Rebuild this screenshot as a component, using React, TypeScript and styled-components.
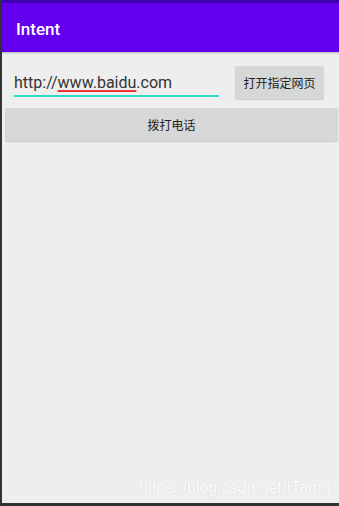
import styled, { createGlobalStyle } from 'styled-components';

const GlobalStyle = createGlobalStyle`
  html, body {
    margin: 0;
    padding: 0;
    background: #333333;
  }
  * {
    box-sizing: border-box;
  }
`;

export default function App() {
  return (
    <>
      <GlobalStyle />
      <Screen>
        <StatusBar />
        <AppBar>
          <Title>Intent</Title>
        </AppBar>
        <Content>
          <UrlRow>
            <UrlField>
              <UrlText>
                http://<Misspelled>www.baidu</Misspelled>.com
              </UrlText>
            </UrlField>
            <Button $small>打开指定网页</Button>
          </UrlRow>
          <Button $wide>拨打电话</Button>
          <Spacer />
          <Watermark>https://blog.csdn.net/ITarmi</Watermark>
        </Content>
      </Screen>
    </>
  );
}

const Screen = styled.div`
  display: flex;
  flex-direction: column;
  width: 337px;
  height: 503px;
  margin-left: 2px;
  background: #eeeeee;
  font-family: Roboto, 'Noto Sans CJK SC', sans-serif;
`;

const StatusBar = styled.div`
  height: 3px;
  background: #3b00b0;
`;

const AppBar = styled.div`
  display: flex;
  align-items: center;
  height: 49px;
  padding: 2px 0 0 14px;
  background: #6200ee;
  box-shadow: 0 1px 2px rgba(0, 0, 0, 0.25);
`;

const Title = styled.div`
  color: #ffffff;
  font-size: 17px;
  font-weight: 500;
`;

const Content = styled.div`
  display: flex;
  flex: 1;
  flex-direction: column;
  padding: 15px 1px 0 3px;
`;

const UrlRow = styled.div`
  display: flex;
  align-items: flex-start;
  justify-content: space-between;
  padding: 0 14px 0 9px;
  margin-bottom: 9px;
`;

const UrlField = styled.div`
  width: 205px;
  padding-top: 6px;
  padding-bottom: 3px;
  border-bottom: 2px solid #2fd9c8;
`;

const UrlText = styled.div`
  color: #333333;
  font-size: 16px;
  line-height: 19px;
  white-space: nowrap;
`;

const Misspelled = styled.span`
  text-decoration: underline;
  text-decoration-color: #ee3333;
  text-decoration-thickness: 2px;
  text-underline-offset: 2px;
`;

const Button = styled.div<{ $small?: boolean; $wide?: boolean }>`
  display: flex;
  align-items: center;
  justify-content: center;
  height: 33px;
  width: ${({ $small }) => ($small ? '89px' : '100%')};
  margin-top: ${({ $small }) => ($small ? '-1px' : '0')};
  background: #d6d7d7;
  border-radius: 2px;
  box-shadow: 0 1px 1px rgba(0, 0, 0, 0.15);
  color: #222222;
  font-size: 12px;
`;

const Spacer = styled.div`
  flex: 1;
`;

const Watermark = styled.div`
  align-self: flex-end;
  padding: 0 8px 6px 0;
  color: #ffffff;
  font-family: 'Liberation Sans', Arial, sans-serif;
  font-size: 16px;
  text-shadow: 0 0 1px rgba(0, 0, 0, 0.15);
  opacity: 0.85;
`;
